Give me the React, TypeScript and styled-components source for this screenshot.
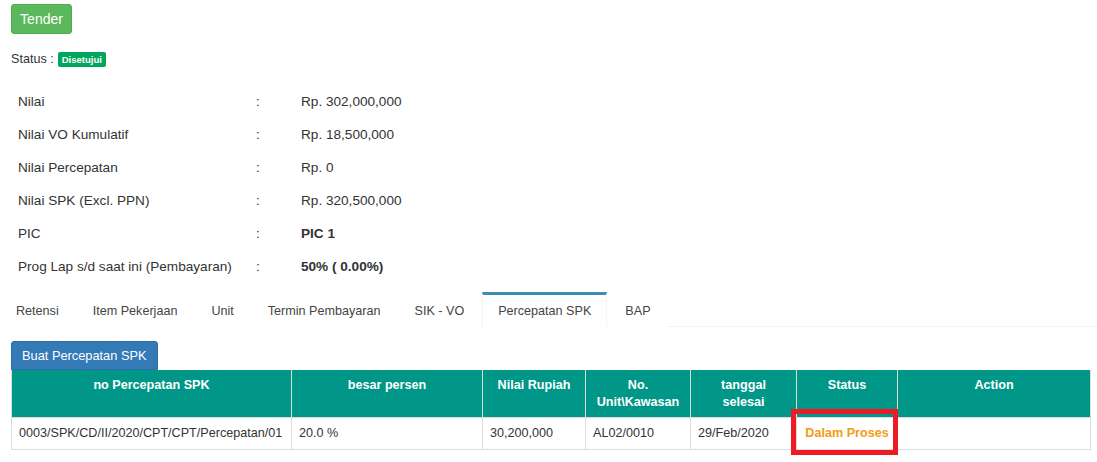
import React from 'react';
import styled, { createGlobalStyle } from 'styled-components';

const GlobalStyle = createGlobalStyle`
	body {
		margin: 0;
		background: #fff;
		font-family: "Liberation Sans", Arial, sans-serif;
		color: #333;
	}
`

const Page = styled.div`
	width: 1097px;
	height: 462px;
	overflow: hidden;
	padding: 4px 7px 0 11px;
	box-sizing: border-box;
`

const TenderButton = styled.button`
	width: 61px;
	height: 30px;
	border: 1px solid #4cae4c;
	border-radius: 3px;
	background-color: #5cb85c;
	color: #fff;
	font-family: inherit;
	font-size: 14px;
	padding: 0;
`

const StatusLine = styled.div`
	display: flex;
	align-items: center;
	gap: 4px;
	margin-top: 18px;
	font-size: 12.6px;
	height: 14px;
`

const Badge = styled.span`
	display: inline-block;
	background-color: #00a65a;
	color: #fff;
	font-size: 9.5px;
	font-weight: bold;
	padding: 2px 4px;
	border-radius: 2px;
	line-height: 11px;
`

const InfoGrid = styled.div`
	display: grid;
	grid-template-columns: 238px 45px auto;
	grid-auto-rows: 33px;
	align-items: center;
	margin: 19px 0 0 7px;
	font-size: 13.6px;
`

const InfoValue = styled.div<{ $bold?: boolean }>`
	font-weight: ${(p) => (p.$bold ? 'bold' : 'normal')};
`

const TabBar = styled.div`
	display: flex;
	gap: 2px;
	margin: 9px -7px 0 -11px;
	height: 34px;
	border-bottom: 1px solid #f4f4f4;
`

const Tab = styled.div<{ $active?: boolean }>`
	display: flex;
	align-items: center;
	padding: 0 15px;
	font-size: 12.6px;
	color: #444;
	border-top: 3px solid ${(p) => (p.$active ? '#3c8dbc' : 'transparent')};
	border-left: 1px solid ${(p) => (p.$active ? '#f4f4f4' : 'transparent')};
	border-right: 1px solid ${(p) => (p.$active ? '#f4f4f4' : 'transparent')};
	background: #fff;
	margin-bottom: -1px;
	box-sizing: border-box;
`

const AddButton = styled.button`
	margin-top: 14px;
	height: 29px;
	padding: 0 10px;
	border: 1px solid #2e6da4;
	border-radius: 3px 3px 0 0;
	background-color: #337ab7;
	color: #fff;
	font-family: inherit;
	font-size: 12.8px;
	display: block;
`

const Table = styled.table`
	border-collapse: collapse;
	width: 1079px;
	table-layout: fixed;
	font-size: 12.6px;
`

const HeadCell = styled.th`
	background-color: #009688;
	color: #fff;
	font-weight: bold;
	text-align: center;
	vertical-align: top;
	padding: 7px 6px 6px;
	line-height: 17px;
	border: 1px solid #ddd;
	border-top: none;
`

const Cell = styled.td`
	padding: 7px 7px 8px;
	line-height: 16px;
	border: 1px solid #ddd;
	white-space: nowrap;
`

const StatusCell = styled(Cell)`
	position: relative;
	color: #f39c12;
	font-weight: bold;
	text-align: center;
`

const Highlight = styled.span`
	position: absolute;
	left: -6px;
	right: -1px;
	top: -9px;
	bottom: -6px;
	border: 5px solid #ed1c24;
	pointer-events: none;
`

const info = [
	{ label: 'Nilai', value: 'Rp. 302,000,000' },
	{ label: 'Nilai VO Kumulatif', value: 'Rp. 18,500,000' },
	{ label: 'Nilai Percepatan', value: 'Rp. 0' },
	{ label: 'Nilai SPK (Excl. PPN)', value: 'Rp. 320,500,000' },
	{ label: 'PIC', value: 'PIC 1', bold: true },
	{ label: 'Prog Lap s/d saat ini (Pembayaran)', value: '50% ( 0.00%)', bold: true },
]

const tabs = ['Retensi', 'Item Pekerjaan', 'Unit', 'Termin Pembayaran', 'SIK - VO', 'Percepatan SPK', 'BAP']

const columns = [280, 191, 103, 105, 106, 101, 193]

export default function App() {
	return (
		<Page>
			<GlobalStyle />
			<TenderButton>Tender</TenderButton>
			<StatusLine>
				Status : <Badge>Disetujui</Badge>
			</StatusLine>
			<InfoGrid>
				{info.map((row) => (
					<React.Fragment key={row.label}>
						<div>{row.label}</div>
						<div>:</div>
						<InfoValue $bold={row.bold}>{row.value}</InfoValue>
					</React.Fragment>
				))}
			</InfoGrid>
			<TabBar>
				{tabs.map((t) => (
					<Tab key={t} $active={t === 'Percepatan SPK'}>{t}</Tab>
				))}
			</TabBar>
			<AddButton>Buat Percepatan SPK</AddButton>
			<Table>
				<colgroup>
					{columns.map((w, i) => <col key={i} style={{ width: w }} />)}
				</colgroup>
				<thead>
					<tr>
						<HeadCell>no Percepatan SPK</HeadCell>
						<HeadCell>besar persen</HeadCell>
						<HeadCell>Nilai Rupiah</HeadCell>
						<HeadCell>No.<br />Unit\Kawasan</HeadCell>
						<HeadCell>tanggal<br />selesai</HeadCell>
						<HeadCell>Status</HeadCell>
						<HeadCell>Action</HeadCell>
					</tr>
				</thead>
				<tbody>
					<tr>
						<Cell>0003/SPK/CD/II/2020/CPT/CPT/Percepatan/01</Cell>
						<Cell>20.0 %</Cell>
						<Cell>30,200,000</Cell>
						<Cell>AL02/0010</Cell>
						<Cell>29/Feb/2020</Cell>
						<StatusCell>
							Dalam Proses
							<Highlight />
						</StatusCell>
						<Cell></Cell>
					</tr>
				</tbody>
			</Table>
		</Page>
	)
}
